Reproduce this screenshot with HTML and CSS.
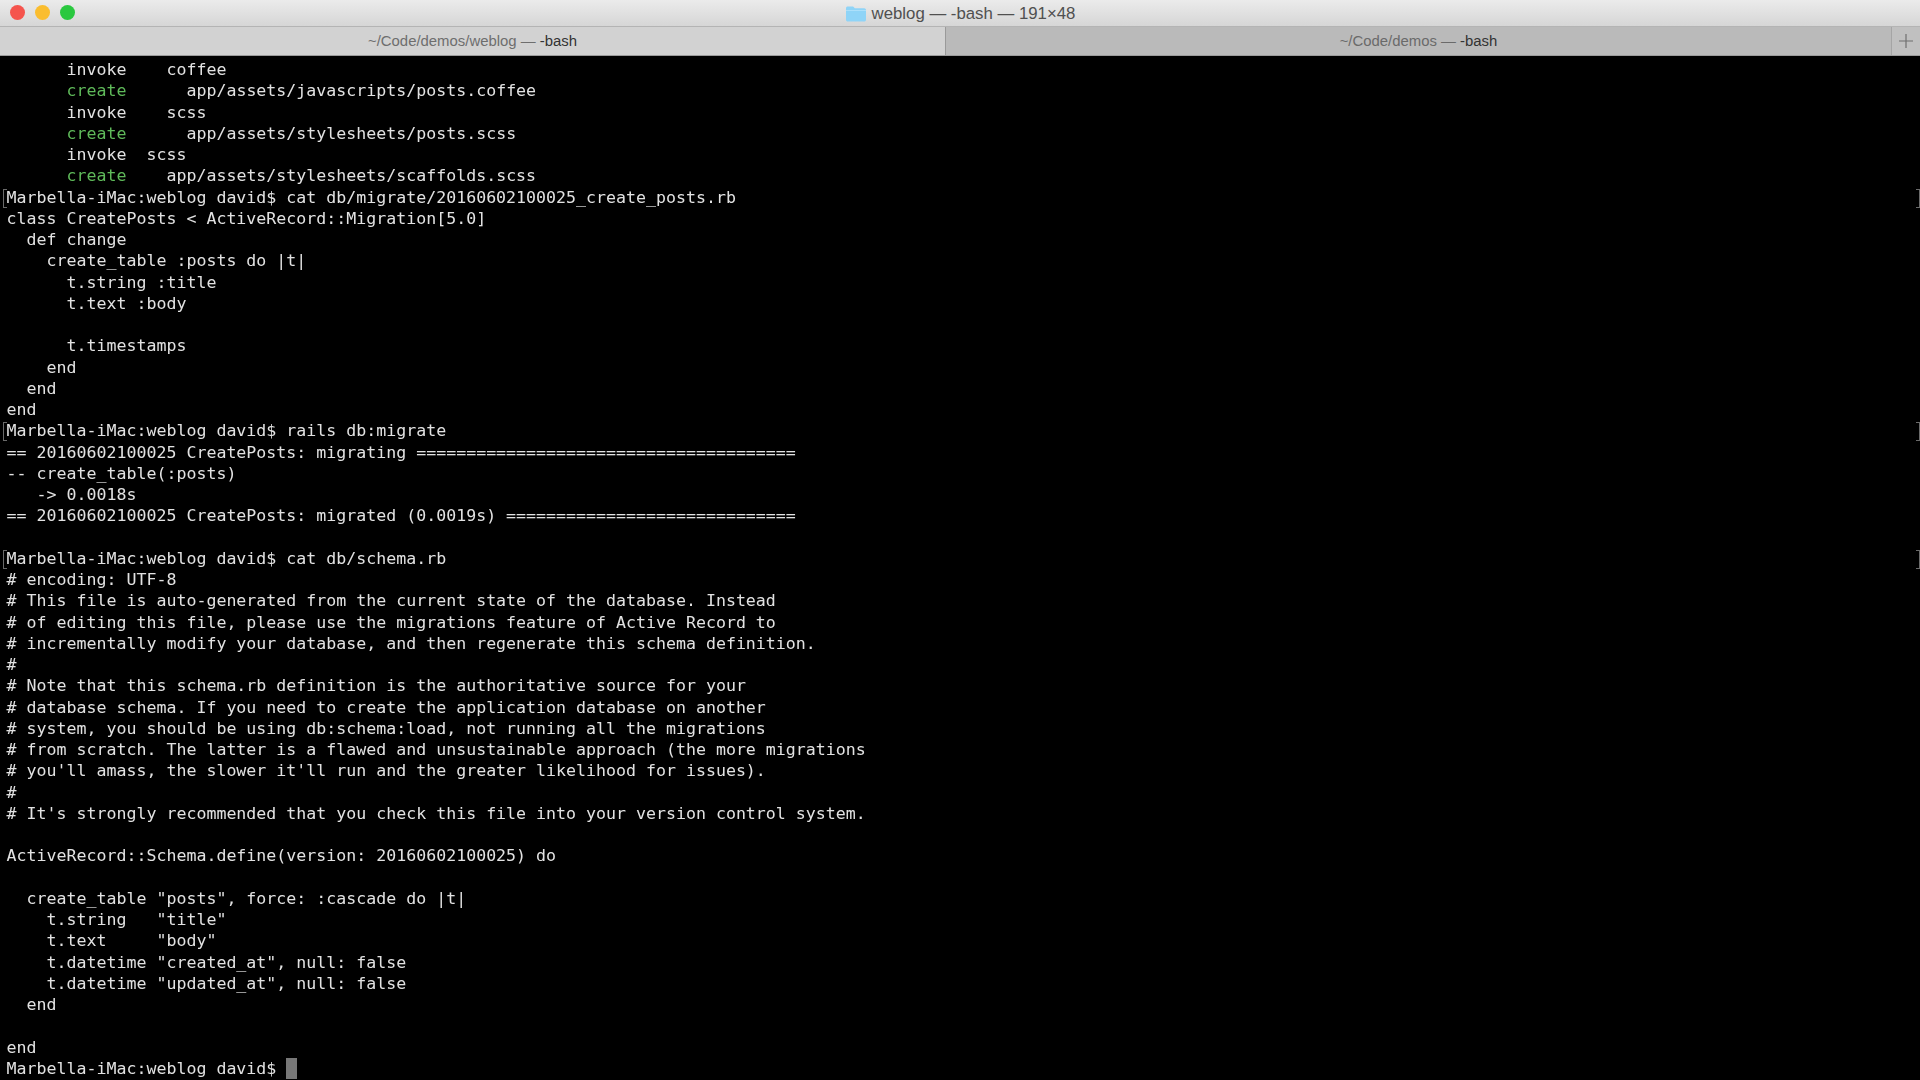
FILE: index.html
```html
<!DOCTYPE html>
<html lang="en">
<head>
<meta charset="utf-8">
<title>weblog — -bash — 191×48</title>
<link rel="stylesheet" href="styles.css">
</head>
<body>
<div class="window">
<header class="titlebar">
<div class="lights"><span class="light red"></span><span class="light yellow"></span><span class="light green"></span></div>
<div class="title">
<svg class="folder" width="20" height="16" viewBox="0 0 20 16"><path d="M0 2.2C0 1 .8.4 1.8.4h4.6c.8 0 1.2.3 1.7 1l.7.9h9.4c1.1 0 1.8.7 1.8 1.8v9.7c0 1.1-.7 1.8-1.8 1.8H1.8C.7 15.6 0 14.900 0 13.800z" fill="#8fd4f7"/><path d="M0 4.200h20v.8H0z" fill="#b5e3fa"/></svg>
<span>weblog — -bash — 191×48</span>
</div>
</header>
<nav class="tabs">
<div class="tab active"><span class="path">~/Code/demos/weblog — </span><span class="cmd">-bash</span></div>
<div class="tab"><span class="path">~/Code/demos — </span><span class="cmd">-bash</span></div>
<div class="newtab"><svg width="14" height="14" viewBox="0 0 14 14"><path d="M7 0v14M0 7h14" stroke="#6f6f6f" stroke-width="1.200" fill="none"/></svg></div>
</nav>
<main class="terminal">
<div class="line">      invoke    coffee</div>
<div class="line">      <span class="g">create</span>      app/assets/javascripts/posts.coffee</div>
<div class="line">      invoke    scss</div>
<div class="line">      <span class="g">create</span>      app/assets/stylesheets/posts.scss</div>
<div class="line">      invoke  scss</div>
<div class="line">      <span class="g">create</span>    app/assets/stylesheets/scaffolds.scss</div>
<div class="line prompt">Marbella-iMac:weblog david$ cat db/migrate/20160602100025_create_posts.rb</div>
<div class="line">class CreatePosts &lt; ActiveRecord::Migration[5.0]</div>
<div class="line">  def change</div>
<div class="line">    create_table :posts do |t|</div>
<div class="line">      t.string :title</div>
<div class="line">      t.text :body</div>
<div class="line"> </div>
<div class="line">      t.timestamps</div>
<div class="line">    end</div>
<div class="line">  end</div>
<div class="line">end</div>
<div class="line prompt">Marbella-iMac:weblog david$ rails db:migrate</div>
<div class="line">== 20160602100025 CreatePosts: migrating ======================================</div>
<div class="line">-- create_table(:posts)</div>
<div class="line">   -&gt; 0.0018s</div>
<div class="line">== 20160602100025 CreatePosts: migrated (0.0019s) =============================</div>
<div class="line"> </div>
<div class="line prompt">Marbella-iMac:weblog david$ cat db/schema.rb</div>
<div class="line"># encoding: UTF-8</div>
<div class="line"># This file is auto-generated from the current state of the database. Instead</div>
<div class="line"># of editing this file, please use the migrations feature of Active Record to</div>
<div class="line"># incrementally modify your database, and then regenerate this schema definition.</div>
<div class="line">#</div>
<div class="line"># Note that this schema.rb definition is the authoritative source for your</div>
<div class="line"># database schema. If you need to create the application database on another</div>
<div class="line"># system, you should be using db:schema:load, not running all the migrations</div>
<div class="line"># from scratch. The latter is a flawed and unsustainable approach (the more migrations</div>
<div class="line"># you'll amass, the slower it'll run and the greater likelihood for issues).</div>
<div class="line">#</div>
<div class="line"># It's strongly recommended that you check this file into your version control system.</div>
<div class="line"> </div>
<div class="line">ActiveRecord::Schema.define(version: 20160602100025) do</div>
<div class="line"> </div>
<div class="line">  create_table "posts", force: :cascade do |t|</div>
<div class="line">    t.string   "title"</div>
<div class="line">    t.text     "body"</div>
<div class="line">    t.datetime "created_at", null: false</div>
<div class="line">    t.datetime "updated_at", null: false</div>
<div class="line">  end</div>
<div class="line"> </div>
<div class="line">end</div>
<div class="line prompt-last">Marbella-iMac:weblog david$ <span class="cursor"></span></div>
</main>
</div>
</body>
</html>
```
FILE: styles.css
```css
* { box-sizing: border-box; }
html, body { margin: 0; height: 100%; background: #000; }
.window { width: 1920px; height: 1080px; display: flex; flex-direction: column; overflow: hidden; background: #000; }
.titlebar {
  height: 27px; flex: none; position: relative; display: flex; align-items: center; justify-content: center;
  background: linear-gradient(#ebebeb, #d6d6d6); border-bottom: 1px solid #b4b4b4;
}
.lights { position: absolute; left: 10px; top: 5px; display: flex; gap: 10px; }
.light { width: 15px; height: 15px; border-radius: 50%; }
.red { background: #f5544d; }
.yellow { background: #fabd2f; }
.green { background: #2ac83f; }
.title { display: flex; align-items: center; gap: 6px; font: 16.800px "Liberation Sans", Arial, sans-serif; color: #505050; margin-left: 1px; padding-top: 1px; }
.tabs { height: 29px; flex: none; display: flex; background: #bcbcbc; border-bottom: 1px solid #9c9c9c; font: 14.900px "Liberation Sans", Arial, sans-serif; }
.tab { flex: none; width: 946px; display: flex; align-items: center; justify-content: center; white-space: pre; background: #bababa; color: #6a6a6a; border-right: 1px solid #a5a5a5; }
.tab.active { background: #d2d2d2; color: #6e6e6e; border-right-color: #9a9a9a; }
.cmd { color: #333; }
.newtab { flex: 1; display: flex; align-items: center; justify-content: center; background: #c0c0c0; }
.terminal {
  flex: 1; padding: 3px 0 0 6.600px; background: #000; color: #e2e2e2;
  font-family: "DejaVu Sans Mono", monospace; font-size: 16.600px; line-height: 21.260px; overflow: hidden;
  filter: blur(0.35px);
}
.line { white-space: pre; height: 21.260px; }
.prompt-last { white-space: pre; height: 21.260px; }
.g { color: #5fba5a; }
.prompt { position: relative; }
.prompt::before, .prompt::after {
  content: ""; position: absolute; top: 2px; width: 3px; height: 17px;
  border: 1px solid #6a6a6a;
}
.prompt::before { left: -4px; border-right: 0; }
.prompt::after { left: 1909.500px; border-left: 0; }
.cursor { display: inline-block; width: 10.500px; height: 21px; background: #777; vertical-align: -5px; }
```
